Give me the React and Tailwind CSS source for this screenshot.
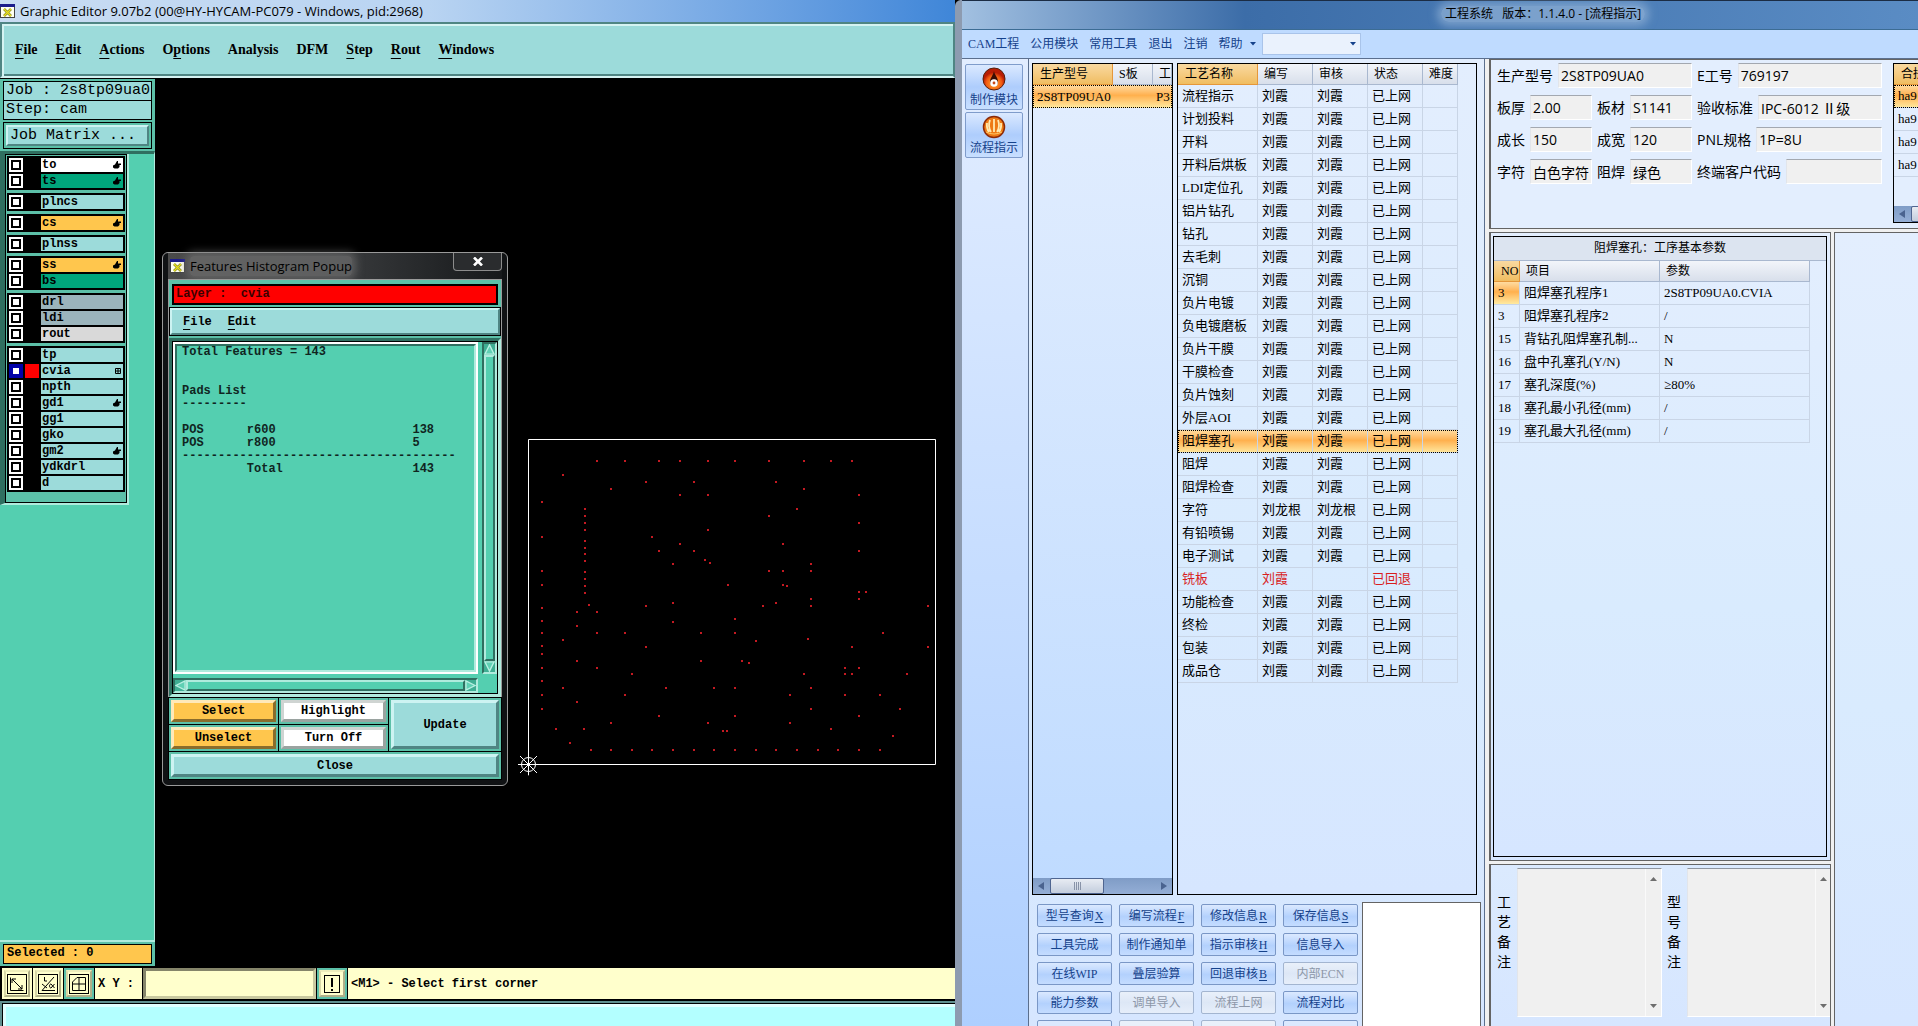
import React from "react";

const MONO = "font-['Liberation_Mono',monospace]";
const CJK = "font-['Liberation_Serif','Noto_Sans_CJK_SC',sans-serif]";
const UI = "font-['Open_Sans','Noto_Sans_CJK_SC',sans-serif]";

const RAISED = "border-2 border-t-[#cdf3f2] border-l-[#cdf3f2] border-b-[#4f8583] border-r-[#4f8583]";

function WindowIcon() {
  return (
    <svg width="15" height="14" viewBox="0 0 15 14" className="shrink-0">
      <rect x="0.5" y="0.5" width="14" height="13" fill="#fffff0" stroke="#444" />
      <rect x="0" y="0" width="15" height="3" fill="#1c1c8c" />
      <path d="M4 5 L11 12 M11 5 L4 12" stroke="#8a8a20" strokeWidth="2.6" />
      <path d="M4 5 L11 12 M11 5 L4 12" stroke="#e8e020" strokeWidth="1.2" />
    </svg>
  );
}

function Hand() {
  return (
    <svg width="8" height="8" viewBox="0 0 8 8" className="shrink-0">
      <path d="M4 0 L5 0 L5 2.6 L8 2.6 L8 4 L6.500 4 L6.500 6 L5 7.500 L1.5 7.500 L0 6.5 L0 4.500 L2 3.500 Z" fill="#000" />
    </svg>
  );
}

function GridMark() {
  return (
    <svg width="6" height="6" viewBox="0 0 6 6" className="shrink-0">
      <path d="M0.5 0.5h5v5h-5z M3 0.5v5 M0.5 3h5" fill="none" stroke="#000" />
    </svg>
  );
}

/* ---------- Graphic editor ---------- */

const menus = [
  ["F", "ile"], ["E", "dit"], ["A", "ctions"], ["", "Op", "t", "ions"], ["", "Analysis"],
  ["", "DFM"], ["S", "tep"], ["R", "out"], ["W", "indows"],
];

const AQUA = "bg-[#9cdbda]";
const layerGroups = [
  [{ n: "to", c: "bg-white", m: "hand" }, { n: "ts", c: "bg-[#00a67c]", m: "hand" }],
  [{ n: "plncs", c: AQUA }],
  [{ n: "cs", c: "bg-[#ffc64d]", m: "hand" }],
  [{ n: "plnss", c: AQUA }],
  [{ n: "ss", c: "bg-[#ffc64d]", m: "hand" }, { n: "bs", c: "bg-[#00a67c]" }],
  [{ n: "drl", c: "bg-[#9bb4bc]" }, { n: "ldi", c: "bg-[#9bb4bc]" }, { n: "rout", c: "bg-[#d9d9d9]" }],
  [
    { n: "tp", c: AQUA }, { n: "cvia", c: AQUA, m: "grid", active: true }, { n: "npth", c: AQUA },
    { n: "gd1", c: AQUA, m: "hand" }, { n: "gg1", c: AQUA }, { n: "gko", c: AQUA },
    { n: "gm2", c: AQUA, m: "hand" }, { n: "ydkdrl", c: AQUA }, { n: "d", c: AQUA },
  ],
];

function LayerRow({ n, c, m, active }) {
  return (
    <label className="flex h-4 items-stretch gap-[2px] px-[2px] py-px">
      <input
        type="checkbox"
        className={
          "my-0 h-[14px] w-[14px] shrink-0 appearance-none bg-white " +
          (active ? "shadow-[inset_0_0_0_4px_#0000a8]" : "shadow-[inset_0_0_0_2px_#fff,inset_0_0_0_4px_#000]")
        }
      />
      <span className={"w-[14px] shrink-0 " + (active ? "bg-[#ff0000]" : "bg-black")} />
      <span className={"flex min-w-0 flex-1 items-center justify-between pl-px pr-[2px] text-xs font-bold leading-[14px] " + c}>
        {n}
        {m === "hand" && <Hand />}
        {m === "grid" && <GridMark />}
      </span>
    </label>
  );
}

/* Pad centres, in thirds of a pixel from the drawing's top left corner. */
const pads = [
  [231, 93], [315, 93], [417, 93], [480, 93], [564, 93], [645, 93], [747, 93], [852, 93], [933, 93], [996, 93],
  [129, 135], [378, 156], [522, 156], [768, 156], [273, 177], [852, 177], [480, 195], [564, 195], [1017, 195],
  [66, 216], [195, 237], [195, 258], [195, 279], [195, 300], [195, 333], [195, 354], [195, 372], [195, 393],
  [195, 426], [195, 447], [195, 468], [195, 489], [831, 237], [747, 258], [1017, 279], [564, 300], [66, 321],
  [396, 321], [480, 342], [789, 342], [417, 363], [522, 363], [1017, 363], [555, 390], [570, 399], [459, 402],
  [873, 402], [66, 423], [747, 423], [789, 423], [873, 423], [66, 465], [624, 465], [789, 465], [801, 468],
  [1017, 486], [1038, 486], [873, 507], [1017, 507], [459, 519], [768, 519], [207, 525], [378, 528], [729, 528],
  [873, 528], [1224, 528], [66, 534], [171, 546], [231, 546], [645, 567], [66, 573], [459, 576], [171, 588],
  [66, 609], [231, 609], [315, 609], [543, 609], [645, 609], [1089, 609], [864, 627], [129, 630], [708, 633],
  [66, 648], [378, 651], [996, 651], [1224, 651], [66, 672], [171, 693], [543, 693], [666, 693], [687, 699],
  [66, 714], [231, 714], [975, 714], [1017, 714], [336, 732], [852, 732], [975, 732], [996, 732], [1161, 732],
  [66, 753], [129, 774], [438, 774], [582, 774], [645, 774], [873, 774], [66, 795], [315, 795], [810, 795],
  [975, 795], [1080, 795], [171, 816], [66, 837], [873, 837], [1140, 837], [417, 858], [645, 858], [1017, 858],
  [273, 879], [564, 879], [810, 879], [108, 897], [192, 897], [933, 897], [609, 903], [621, 903], [1119, 918],
  [150, 939], [213, 960], [273, 960], [336, 960], [396, 960], [459, 960], [522, 960], [582, 960], [645, 960],
  [708, 960], [768, 960], [831, 960], [894, 960], [954, 960], [1017, 960], [1080, 960],
];

function Board() {
  return (
    <svg width="440" height="350" viewBox="0 0 1320 1050" overflow="visible" className="absolute left-[365px] top-[352px]">
      <path d="M25.500 28.500H1246.500V1003.500H25.500Z" fill="none" stroke="#fff" strokeWidth="3" />
      <g fill="#c41a22">
        {pads.map(([x, y]) => (
          <rect key={x + "-" + y} x={x - 3} y={y - 3} width="6" height="6" />
        ))}
      </g>
      <g stroke="#fff" strokeWidth="3" fill="none">
        <circle cx="25.500" cy="1003.500" r="21" />
        <path d="M-6 1003.500H60M25.500 970V1036M0 978L51 1029M51 978L0 1029" />
      </g>
    </svg>
  );
}

const report = [
  "Total Features = 143", "", "", "Pads List", "---------", "",
  "POS      r600                   138",
  "POS      r800                   5",
  "--------------------------------------",
  "         Total                  143",
].join("\n");

function Cell({ className = "", tone, children }) {
  return (
    <div className={"flex bg-[#5cc0a8] p-[2px] outline outline-1 outline-black " + className}>
      <button type="button" className={"flex-1 border-[3px] text-xs font-bold leading-4 " + tone}>{children}</button>
    </div>
  );
}

const ORANGE_BTN = "bg-[#ffc64d] border-t-[#ffe9b8] border-l-[#ffe9b8] border-b-[#8a6c2b] border-r-[#8a6c2b]";
const WHITE_BTN = "bg-white border-t-[#cfd4d2] border-l-[#cfd4d2] border-b-[#9aa3a0] border-r-[#9aa3a0]";
const AQUA_BTN = "bg-[#9cdbda] border-t-[#cdf3f2] border-l-[#cdf3f2] border-b-[#4f8583] border-r-[#4f8583]";

function Arrow({ d }) {
  return (
    <svg width="11" height="11" viewBox="0 0 12 12" className="shrink-0 bg-[#3fae93]">
      <path d={d} fill="#5fd0b4" stroke="#b9f0e2" strokeWidth="1.5" />
    </svg>
  );
}

function Popup() {
  return (
    <section className="absolute left-[7px] top-[174px] flex h-[534px] w-[346px] flex-col rounded-md border border-[#9a9a9a] bg-[#101214] px-[5px] pb-[5px]">
      <header className="flex h-[26px] items-start justify-between bg-linear-to-r from-[#4a4a4a] via-[#3a3c3e] to-[#17191b]">
        <div className={"flex items-center gap-[5px] pl-[2px] pt-[3px] text-[13px] leading-5 text-black " + UI}>
          <WindowIcon />
          <span className="rounded bg-[#777]/60 shadow-[0_0_8px_4px_rgba(119,119,119,0.6)]">Features Histogram Popup</span>
        </div>
        <button type="button" aria-label="Close window" className="flex h-[18px] w-[49px] items-center justify-center rounded-b border border-t-0 border-[#8c8c8c] bg-[#2a2c2e]">
          <svg width="10" height="9" viewBox="0 0 10 9"><path d="M1 0.500L9 8.500M9 0.500L1 8.500" stroke="#fff" strokeWidth="2.6" /></svg>
        </button>
      </header>
      <div className="flex min-h-0 flex-1 flex-col border border-[#9a9a9a] bg-[#5cc0a8]">
        <div className="m-[3px] mt-1 h-[21px] whitespace-pre border-2 border-black bg-[#ff0000] pl-[2px] text-xs font-bold leading-[17px] text-[#3a0000]">{"Layer :  cvia"}</div>
        <nav className={"mx-px flex h-[27px] items-center gap-4 bg-[#9cdbda] pl-[11px] text-xs font-bold outline outline-1 outline-black " + RAISED}>
          <button type="button"><span className="underline underline-offset-4">F</span>ile</button>
          <button type="button"><span className="underline underline-offset-4">E</span>dit</button>
        </nav>
        <div className="mt-[3px] flex min-h-0 flex-1 flex-col border-[3px] border-t-[#2f6f60] border-l-[#2f6f60] border-b-[#b0ebdd] border-r-[#b0ebdd] bg-[#54cfb0]">
          <div className="flex min-h-0 flex-1 flex-col border border-black">
            <div className="flex min-h-0 flex-1 gap-[4px]">
              <div className="min-w-0 flex-1 border-2 border-white">
                <pre className={"h-full overflow-hidden border-2 border-t-[#2f6f60] border-l-[#2f6f60] border-b-[#b0ebdd] border-r-[#b0ebdd] pl-[5px] text-xs font-bold leading-[13px] text-[#10251f] " + MONO}>{report}</pre>
              </div>
              <div className="flex w-[15px] flex-col border-2 border-t-[#2f6f60] border-l-[#2f6f60] border-b-[#b0ebdd] border-r-[#b0ebdd]">
                <Arrow d="M6 1L11 11H1Z" />
                <div className="flex-1 border-2 border-t-[#b0ebdd] border-l-[#b0ebdd] border-b-[#2f6f60] border-r-[#2f6f60]" />
                <Arrow d="M6 11L11 1H1Z" />
              </div>
            </div>
            <div className="mr-[19px] mt-[4px] flex h-[15px] border-2 border-t-[#2f6f60] border-l-[#2f6f60] border-b-[#b0ebdd] border-r-[#b0ebdd]">
              <Arrow d="M1 6L11 1V11Z" />
              <div className="flex-1 border-2 border-t-[#b0ebdd] border-l-[#b0ebdd] border-b-[#2f6f60] border-r-[#2f6f60]" />
              <Arrow d="M11 6L1 1V11Z" />
            </div>
          </div>
        </div>
        <div className="grid grid-cols-[109fr_109fr_112fr] gap-px bg-black pt-px">
          <Cell className="h-[26px]" tone={ORANGE_BTN}>Select</Cell>
          <Cell className="h-[26px]" tone={WHITE_BTN}>Highlight</Cell>
          <Cell className="row-span-2" tone={AQUA_BTN}>Update</Cell>
          <Cell className="h-[26px]" tone={ORANGE_BTN}>Unselect</Cell>
          <Cell className="h-[26px]" tone={WHITE_BTN}>Turn Off</Cell>
          <Cell className="col-span-3 h-[27px]" tone={AQUA_BTN}>Close</Cell>
        </div>
      </div>
    </section>
  );
}

function ToolButton({ label, pressed, children }) {
  return (
    <div className={"flex w-[30px] shrink-0 items-center justify-center " + (pressed ? "bg-[#5cc0a8]" : "bg-[#ffffcc]")}>
      <button type="button" aria-label={label} className="flex h-[27px] w-[26px] items-center justify-center border-2 border-t-[#eeeebb] border-l-[#d8d8a8] border-b-[#b0b088] border-r-[#b0b088] bg-[#ffffcc]">
        <svg width="20" height="20" viewBox="0 0 20 20" fill="none" stroke="#000">{children}</svg>
      </button>
    </div>
  );
}

function Editor() {
  return (
    <section className={"flex min-w-0 flex-col overflow-hidden bg-black text-black " + MONO}>
      <header className={"flex h-[22px] items-center gap-[5px] bg-linear-to-r from-[#c9dcf2] via-[#b9d4f2] via-45% to-[#3f86d8] pb-px text-[13px] leading-4 " + UI}>
        <WindowIcon />
        <h1 className="truncate">Graphic Editor 9.07b2 (00@HY-HYCAM-PC079 - Windows, pid:2968)</h1>
      </header>
      <nav className="flex h-[56px] shrink-0 items-center gap-[18px] border-2 border-t-[#4f8583] border-l-[#4f8583] border-b-[#d5f3f2] border-r-[#4f8583] bg-[#9cdbda] pl-[13px] font-['Liberation_Serif',serif] text-sm font-bold shadow-[inset_2px_2px_0_#d5f3f2,inset_0_-2px_0_#4f8583]">
        {menus.map(([u, ...rest]) => (
          <button key={u + rest.join("")} type="button" className="whitespace-nowrap">
            {u && <span className="underline underline-offset-4">{u}</span>}
            {rest.length === 3 ? (<>{"O"}<span className="underline underline-offset-4">p</span>{"tions"}</>) : rest.join("")}
          </button>
        ))}
      </nav>
      <div className="flex min-h-0 flex-1">
        <aside className="flex w-[155px] shrink-0 flex-col bg-[#54cfb0]">
          <div className="border-t border-black bg-[#5cc0a8] px-[3px] pb-[2px] pt-[2px]">
            <div className="h-[20px] whitespace-pre border border-black bg-[#9cdbda] pl-[2px] text-[15px] leading-[18px]">Job : 2s8tp09ua0</div>
            <div className="-mt-px h-[20px] whitespace-pre border border-black bg-[#9cdbda] pl-[2px] text-[15px] leading-[18px]">Step: cam</div>
            <div className="mt-[2px] flex h-[27px] border border-black p-[2px]">
              <button type="button" className={"flex-1 whitespace-pre bg-[#9cdbda] pl-[2px] text-left text-[15px] leading-[18px] " + RAISED}>Job Matrix ...</button>
            </div>
          </div>
          <div className="flex min-h-0 flex-1 flex-col border-r border-t-[3px] border-r-[#b0ebdd] border-t-[#2f6f60]">
            <div className="mr-[25px] border-b-2 border-l-[5px] border-r-2 border-b-[#b0ebdd] border-l-[#2f6f60] border-r-[#b0ebdd]">
              <div className="flex flex-col gap-[3px] border border-black bg-[#5cc0a8] px-px pb-[10px] pt-px">
                {layerGroups.map((g) => (
                  <div key={g[0].n} className="bg-black py-px">
                    {g.map((l) => <LayerRow key={l.n} {...l} />)}
                  </div>
                ))}
              </div>
            </div>
          </div>
          <div className="border-b border-t-2 border-b-black border-t-[#b0ebdd] bg-[#5cc0a8] px-[3px] pb-[2px] pt-[2px]">
            <div className="h-[20px] border border-black bg-[#ffc64d] pl-[3px] text-xs font-bold leading-[17px]">Selected : 0</div>
          </div>
        </aside>
        <main className="relative min-w-0 flex-1 overflow-hidden bg-black">
          <Popup />
          <Board />
        </main>
      </div>
      <div className="flex h-[34px] shrink-0 gap-px border-b-2 border-black bg-black pl-[2px] pt-px">
        <ToolButton label="Corner to corner">
          <rect x="0.5" y="0.5" width="19" height="19" /><path d="M3.500 3.500V16.500H16.500" />
          <path d="M5 5L15 15M5 9V5H9M15 11V15H11" />
        </ToolButton>
        <ToolButton label="Angle">
          <rect x="0.5" y="0.5" width="19" height="19" /><path d="M16 3L4 16.500H17M6.500 3V7H9M4 10L9 14" />
          <path d="M16.500 10L13 14C11 14 11 10 13 10L16.500 14" />
        </ToolButton>
        <ToolButton label="Grid" pressed>
          <rect x="0.5" y="0.5" width="19" height="19" /><path d="M3.500 8L8 3.500H16.500V16.500H3.500ZM10 3.500V16.500M3.500 10H16.500" />
        </ToolButton>
        <label htmlFor="xy" className="flex w-[47px] items-center whitespace-pre bg-[#ffffcc] pl-[3px] text-xs font-bold">X Y :</label>
        <input id="xy" type="text" className="w-[173px] border-[3px] border-t-[#85856a] border-l-[#85856a] border-b-[#c9c9a0] border-r-[#c9c9a0] bg-[#ffffcc] px-1 text-xs font-bold" />
        <ToolButton label="Alert" pressed>
          <rect x="2.500" y="1.500" width="15" height="17" /><path d="M10 4V13M10 15V17" strokeWidth="2" />
        </ToolButton>
        <p className="flex min-w-0 flex-1 items-center bg-[#ffffcc] pl-[3px] text-xs font-bold">&lt;M1&gt; - Select first corner</p>
      </div>
      <div className="h-[25px] shrink-0 border-l-2 border-t-2 border-[#5f8f8f] bg-[#b3ffff] shadow-[inset_1px_1px_0_#000,inset_4px_4px_0_#e0ffff]" />
    </section>
  );
}

/* ---------- Engineering system ---------- */

const TH = "h-[21px] overflow-hidden whitespace-nowrap border-b border-r border-[#a9b8cf] bg-linear-to-b from-[#f2f5fa] to-[#d8dfeb] px-[6px] py-0 text-left text-xs font-normal leading-5";
const TH_ON = "h-[21px] overflow-hidden whitespace-nowrap border-b border-r border-[#e5973a] bg-linear-to-b from-[#f9d9a0] to-[#f0bd60] px-[7px] py-0 text-left text-xs font-normal leading-5";
const TD = "h-[23px] overflow-hidden whitespace-nowrap border-b border-r border-[#c9d5e6] px-[4px] py-0 text-[13px] leading-[22px]";
const HOT = "bg-linear-to-b from-[#ffdca0] via-[#ffb04d] via-45% to-[#ffeaa0]";

const steps = [
  "流程指示", "计划投料", "开料", "开料后烘板", "LDI定位孔", "铝片钻孔", "钻孔", "去毛刺", "沉铜", "负片电镀",
  "负电镀磨板", "负片干膜", "干膜检查", "负片蚀刻", "外层AOI", "阻焊塞孔", "阻焊", "阻焊检查", "字符", "有铅喷锡",
  "电子测试", "铣板", "功能检查", "终检", "包装", "成品仓",
];

const params = [
  ["3", "阻焊塞孔程序1", "2S8TP09UA0.CVIA"], ["3", "阻焊塞孔程序2", "/"], ["15", "背钻孔阻焊塞孔制...", "N"],
  ["16", "盘中孔塞孔(Y/N)", "N"], ["17", "塞孔深度(%)", "≥80%"], ["18", "塞孔最小孔径(mm)", "/"], ["19", "塞孔最大孔径(mm)", "/"],
];

const commands = [
  ["型号查询", "X"], ["编写流程", "F"], ["修改信息", "R"], ["保存信息", "S"],
  ["工具完成"], ["制作通知单"], ["指示审核", "H"], ["信息导入"],
  ["在线WIP"], ["叠层验算"], ["回退审核", "B"], ["内部ECN", "", true],
  ["能力参数"], ["调单导入", "", true], ["流程上网", "", true], ["流程对比"],
];

function ProcessTable() {
  return (
    <table className="w-[280px] table-fixed border-separate border-spacing-0">
      <colgroup>
        <col className="w-[80px]" /><col className="w-[55px]" /><col className="w-[55px]" /><col className="w-[55px]" /><col className="w-[35px]" />
      </colgroup>
      <thead>
        <tr>
          <th className={TH_ON}>工艺名称</th><th className={TH}>编写</th><th className={TH}>审核</th><th className={TH}>状态</th><th className={TH}>难度</th>
        </tr>
      </thead>
      <tbody>
        {steps.map((s) => {
          const back = s === "铣板";
          const who = s === "字符" ? "刘龙根" : "刘霞";
          return (
            <tr key={s} className={s === "阻焊塞孔" ? HOT + " outline-1 -outline-offset-1 outline-dotted outline-black" : back ? "text-[#d81e1e]" : ""}>
              <td className={TD}>{s}</td><td className={TD}>{who}</td><td className={TD}>{back ? "" : who}</td>
              <td className={TD}>{back ? "已回退" : "已上网"}</td><td className={TD} />
            </tr>
          );
        })}
      </tbody>
    </table>
  );
}

function HScroll({ className = "", thumb }) {
  return (
    <div className={"flex h-4 shrink-0 items-center justify-between bg-linear-to-b from-[#7f9cc6] to-[#94aed6] px-[5px] " + className}>
      <svg width="6" height="8" viewBox="0 0 6 8" className="shrink-0"><path d="M6 0V8L0 4Z" fill="#4a638f" /></svg>
      <div className={"ml-[6px] flex h-4 shrink-0 items-center justify-center gap-px rounded-xs border border-[#4f6590] bg-linear-to-b from-[#e8ecf3] to-[#c3cddd] " + thumb}>
        <i className="h-2 w-px bg-[#8893a8]" /><i className="h-2 w-px bg-[#8893a8]" /><i className="h-2 w-px bg-[#8893a8]" /><i className="h-2 w-px bg-[#8893a8]" />
      </div>
      <span className="flex-1" />
      <svg width="6" height="8" viewBox="0 0 6 8" className="shrink-0"><path d="M0 0V8L6 4Z" fill="#4a638f" /></svg>
    </div>
  );
}

function Field({ id, label, value }) {
  return (
    <div className="flex min-w-0 flex-1 items-center gap-[5px]">
      <label htmlFor={id} className="shrink-0 whitespace-nowrap">{label}</label>
      <input id={id} readOnly defaultValue={value} className="h-[25px] w-0 min-w-0 flex-1 border border-t-[#a3a8b0] border-l-[#e2e5ea] border-b-white border-r-white bg-[#f0f0f0] px-[2px]" />
    </div>
  );
}

function Note({ id, label }) {
  return (
    <div className="flex gap-[6px]">
      <label htmlFor={id} className="w-[14px] break-all pt-[24px] leading-5">{label}</label>
      <div className="flex h-[149px] w-[145px] border border-t-[#8f959e] border-l-[#e2e5ea] border-b-white border-r-white bg-[#f0f0f0]">
        <textarea id={id} readOnly className="min-w-0 flex-1 resize-none bg-[#f0f0f0]" />
        <div className="flex w-4 flex-col items-center justify-between border-l border-[#fafafa] py-2">
          <svg width="7" height="4" viewBox="0 0 7 4"><path d="M0 4H7L3.500 0Z" fill="#6e6e6e" /></svg>
          <svg width="7" height="4" viewBox="0 0 7 4"><path d="M0 0H7L3.500 4Z" fill="#6e6e6e" /></svg>
        </div>
      </div>
    </div>
  );
}

const SIDE_BTN = "flex h-[46px] flex-col items-center justify-between rounded-xs border border-[#7f9ccb] bg-linear-to-b from-[#dbe9ff] via-[#aecdfc] via-50% to-[#c8dfff] pb-px pt-[2px] text-xs leading-4 text-[#15428b]";

function System() {
  return (
    <section className={"flex min-w-0 flex-col overflow-hidden rounded-tl-md border-l-[7px] border-l-[#8d9bb0] bg-[#bfdbff] text-black shadow-[inset_1px_0_0_#4b5f7d] " + CJK}>
      <header className={"-ml-[6px] flex h-[30px] shrink-0 items-center justify-center border-b border-t border-b-[#3c6c94] border-t-[#1b2c44] bg-linear-to-r from-[#a4c2e2] via-[#3c6da8] via-30% to-[#5a8cc4] pb-[3px] pl-[212px] text-xs " + UI}>
        <h2 className="whitespace-pre rounded-full bg-[#9dbbdc]/60 px-1 shadow-[0_0_8px_4px_rgba(157,187,220,0.6)]">{"工程系统   版本：1.1.4.0 - [流程指示]"}</h2>
      </header>
      <nav className="flex h-[28px] shrink-0 items-center bg-[#bfdbff] pl-[6px] text-xs text-[#15428b]">
        <div className="flex gap-[11px] whitespace-nowrap">
          <button type="button">CAM工程</button><button type="button">公用模块</button><button type="button">常用工具</button>
          <button type="button">退出</button><button type="button">注销</button><button type="button">帮助</button>
        </div>
        <svg width="6" height="4" viewBox="0 0 6 4" className="ml-[8px]"><path d="M0 0H6L3 3.500Z" fill="#15428b" /></svg>
        <div className="relative ml-[6px]">
          <select aria-label="Search" className="block h-[22px] w-[99px] appearance-none border border-[#a9c4ea] bg-[#eaf2fd]" />
          <svg width="6" height="4" viewBox="0 0 6 4" className="pointer-events-none absolute right-[5px] top-[9px]"><path d="M0 0H6L3 3.500Z" fill="#15428b" /></svg>
        </div>
      </nav>
      <div className="flex min-h-0 flex-1 border-t border-[#5b6f8e]">
        <aside className="flex w-[66px] shrink-0 flex-col gap-[2px] bg-linear-to-b from-[#e2edff] to-[#aecfff] px-[3px] pr-[5px] pt-[5px]">
          <button type="button" className={SIDE_BTN}>
            <svg width="24" height="24" viewBox="0 0 24 24">
              <defs><radialGradient id="fire" cy="0.7"><stop offset="0" stopColor="#ffb02e" /><stop offset="0.700" stopColor="#f25a12" /><stop offset="1" stopColor="#b81c04" /></radialGradient></defs>
              <circle cx="12" cy="12" r="11" fill="url(#fire)" stroke="#55200c" />
              <path d="M12 4C12.500 8 16 10 16 15A4 4 0 0 1 8 15C8 11 11 9 12 4Z" fill="#3a0d04" />
              <circle cx="12" cy="16" r="3.800" fill="#fff" /><circle cx="12" cy="16" r="1.400" fill="#c84a1a" />
            </svg>
            制作模块
          </button>
          <button type="button" className={SIDE_BTN}>
            <svg width="24" height="24" viewBox="0 0 24 24">
              <circle cx="12" cy="12" r="10.500" fill="#ee7a14" stroke="#8c2a08" strokeWidth="1.500" />
              <path d="M12 4V17M8 5C6.500 9 6.500 13 9 17M16 5C17.500 9 17.500 13 15 17M5 8C4.500 12 5.500 15 7 17M19 8C19.500 12 18.500 15 17 17" stroke="#ffe9b0" strokeWidth="1.800" fill="none" />
              <path d="M4 17Q12 21 20 17" stroke="#ffc766" fill="none" />
            </svg>
            流程指示
          </button>
        </aside>
        <div className="flex w-[457px] shrink-0 flex-col border-x border-[#5b6f8e] bg-linear-to-b from-[#e3eefe] via-[#d8ebfe] via-60% to-[#d6e6ff]">
          <div className="flex min-h-0 flex-1 gap-1 px-[3px] pr-[7px] pt-1">
            <div className="flex w-[141px] shrink-0 flex-col justify-between overflow-hidden border border-black bg-linear-to-b from-[#e3eefe] to-[#bfdbff]">
              <table className="w-full table-fixed border-separate border-spacing-0">
                <colgroup><col className="w-[80px]" /><col className="w-[40px]" /><col /></colgroup>
                <thead><tr><th className={TH_ON}>生产型号</th><th className={TH}>S板</th><th className={TH + " pr-0"}>工</th></tr></thead>
                <tbody>
                  <tr className={HOT + " outline-1 -outline-offset-1 outline-dotted outline-black"}>
                    <td className="h-[23px] whitespace-nowrap px-1 py-0 text-[13px] leading-[22px]">2S8TP09UA0</td><td />
                    <td className="px-[3px] py-0 text-[13px] leading-[22px]">P3</td>
                  </tr>
                </tbody>
              </table>
              <HScroll thumb="w-[54px]" />
            </div>
            <div className="min-w-0 flex-1 overflow-hidden border border-black bg-linear-to-b from-[#e3eefe] via-[#d9ebfe] via-60% to-[#d6e6ff]">
              <ProcessTable />
            </div>
          </div>
          <div className="flex h-[131px] shrink-0 gap-[4px] overflow-hidden pl-2">
            <div className="grid shrink-0 grid-cols-4 content-start gap-x-[7px] gap-y-[6px] pt-[9px]">
              {commands.map(([t, k, off]) => (
                <button
                  key={t}
                  type="button"
                  disabled={off}
                  className={
                    "h-[23px] w-[75px] whitespace-nowrap rounded-xs border bg-linear-to-b text-xs leading-5 " +
                    (off
                      ? "border-[#a3b5d0] from-[#e9f0fa] via-[#dde7f6] to-[#e6eefa] text-[#8d97a8]"
                      : "border-[#7a97c6] from-[#dbe9ff] via-[#b3d1fd] via-55% to-[#c4dcff] text-[#15428b]")
                  }
                >
                  {t}{k && <span className="ml-px underline underline-offset-2">{k}</span>}
                </button>
              ))}
              <span className="h-[23px] rounded-xs border border-[#7a97c6] bg-[#dbe9ff]" />
              <span className="h-[23px] rounded-xs border border-[#a3b5d0] bg-[#e9f0fa]" />
              <span className="h-[23px] rounded-xs border border-[#a3b5d0] bg-[#e9f0fa]" />
              <span className="h-[23px] rounded-xs border border-[#7a97c6] bg-[#dbe9ff]" />
            </div>
            <div className="mt-[7px] w-[119px] border border-b-0 border-[#646464] bg-white" />
          </div>
        </div>
        <div className={"flex min-w-0 flex-1 flex-col gap-[3px] bg-[#f0f0f0] pl-1 text-sm " + UI}>
          <div className="flex h-[170px] shrink-0 overflow-hidden border-b border-l-2 border-t border-[#646464] bg-[#e3eefe] pl-[6px] pt-[3px]">
            <div className="flex w-[385px] shrink-0 flex-col gap-[7px]">
              <div className="flex gap-[5px]">
                <div className="flex w-[195px]"><Field id="model" label="生产型号" value="2S8TP09UA0" /></div>
                <Field id="eno" label="E工号" value="769197" />
              </div>
              <div className="flex gap-[5px]">
                <div className="flex w-[195px] gap-[5px]"><Field id="thick" label="板厚" value="2.00" /><Field id="mat" label="板材" value="S1141" /></div>
                <Field id="std" label="验收标准" value="IPC-6012 Ⅱ级" />
              </div>
              <div className="flex gap-[5px]">
                <div className="flex w-[195px] gap-[5px]"><Field id="len" label="成长" value="150" /><Field id="wid" label="成宽" value="120" /></div>
                <Field id="pnl" label="PNL规格" value="1P=8U" />
              </div>
              <div className="flex gap-[5px]">
                <div className="flex w-[195px] gap-[5px]"><Field id="silk" label="字符" value="白色字符" /><Field id="mask" label="阻焊" value="绿色" /></div>
                <Field id="cust" label="终端客户代码" value="" />
              </div>
            </div>
            <div className={"ml-[11px] flex h-[160px] min-w-[200px] flex-1 flex-col overflow-hidden border border-black " + CJK}>
              <table className="w-full table-fixed border-separate border-spacing-0">
                <thead><tr><th className={TH_ON}>合拼</th></tr></thead>
                <tbody>
                  {[0, 1, 2, 3].map((i) => (
                    <tr key={i} className={i === 0 ? HOT + " outline-1 -outline-offset-1 outline-dotted outline-black" : ""}>
                      <td className={TD}>ha9</td>
                    </tr>
                  ))}
                </tbody>
              </table>
              <HScroll className="mt-auto" thumb="w-[54px]" />
            </div>
          </div>
          <div className="flex min-h-0 flex-1 gap-[3px]">
            <div className="flex w-[342px] shrink-0 flex-col gap-[3px]">
              <div className="flex min-h-0 flex-1 border border-l-2 border-[#646464] bg-linear-to-b from-[#e3eefe] via-[#d9ebfe] via-60% to-[#d6e6ff] p-[3px] pl-[2px]">
                <div className={"min-w-0 flex-1 border border-black bg-linear-to-b from-[#e3eefe] via-[#d9ebfe] via-60% to-[#d6e6ff] " + CJK}>
                  <table className="w-full table-fixed border-separate border-spacing-0">
                    <caption className="h-6 border-b border-[#a9b8cf] bg-[#dce4f0] text-xs leading-[23px]">阻焊塞孔：工序基本参数</caption>
                    <colgroup><col className="w-[26px]" /><col className="w-[140px]" /><col className="w-[150px]" /><col /></colgroup>
                    <thead><tr><th className={TH_ON + " text-center px-0"}>NO</th><th className={TH}>项目</th><th className={TH}>参数</th><td /></tr></thead>
                    <tbody>
                      {params.map(([n, a, b], i) => (
                        <tr key={a}>
                          <td className={TD + (i === 0 ? " " + HOT : "")}>{n}</td><td className={TD}>{a}</td><td className={TD}>{b}</td><td />
                        </tr>
                      ))}
                    </tbody>
                  </table>
                </div>
              </div>
              <div className="flex h-[162px] shrink-0 gap-[5px] overflow-hidden border border-b-0 border-l-2 border-[#646464] bg-linear-to-b from-[#dbeafe] to-[#d6e6ff] pl-[6px] pt-[3px]">
                <Note id="note1" label="工艺备注" />
                <Note id="note2" label="型号备注" />
              </div>
            </div>
            <div className="min-w-0 flex-1 border-l border-t border-[#646464] bg-linear-to-b from-[#e3eefe] via-[#d9ebfe] via-60% to-[#d6e6ff]" />
          </div>
        </div>
      </div>
    </section>
  );
}

export default function App() {
  return (
    <div className="grid h-screen grid-cols-[955fr_963fr] grid-rows-[minmax(0,1fr)] overflow-hidden bg-black">
      <Editor />
      <System />
    </div>
  );
}
